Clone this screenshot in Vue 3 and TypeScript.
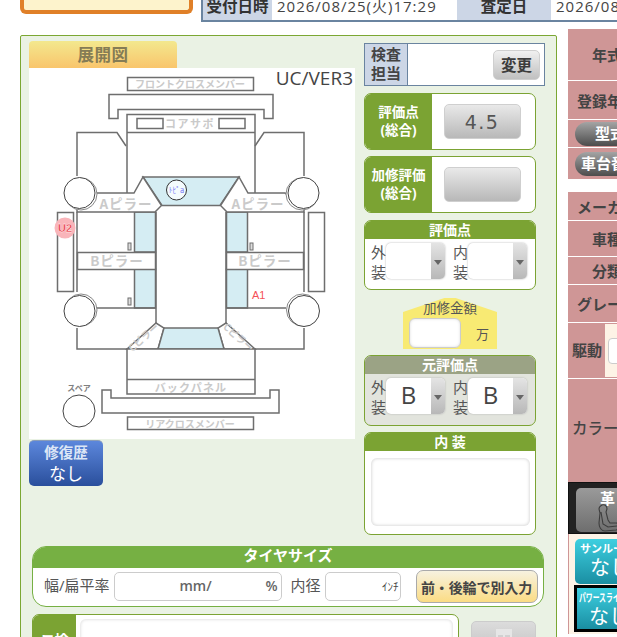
<script setup lang="ts">
const doorSlots = [
  { x: 128, y: 243 },
  { x: 128, y: 298 },
  { x: 250, y: 243 },
]
const wheels = [
  { x: 79.5, y: 193, dx: 1.5, dy: 1 },
  { x: 303.5, y: 193, dx: -1.5, dy: 1 },
  { x: 79.5, y: 311, dx: 1.5, dy: -1 },
  { x: 304, y: 311, dx: -1.5, dy: -1 },
]
const specGroupA = [
  { label: '年式', h: 51 },
  { label: '登録年月', h: 38 },
]
const specGroupB = [
  { label: 'メーカー', h: 28 },
  { label: '車種', h: 35 },
  { label: '分類', h: 27 },
  { label: 'グレード', h: 37 },
]
</script>

<template>
  <div class="page">
    <header class="top">
      <div class="notice"></div>
      <div class="meta">
        <div class="meta-th first">受付日時</div>
        <div class="meta-td first-td">2026/08/25(火)17:29</div>
        <div class="meta-th second">査定日</div>
        <div class="meta-td">2026/08/25</div>
      </div>
    </header>

    <div class="body">
      <main class="panel">
        <div class="upper">
          <section class="left">
            <div class="tab">展開図</div>
            <div class="sheet">
              <span class="ver">UC/VER3</span>
              <svg class="diagram" viewBox="29 68 326 371" width="326" height="371">
                <g class="line">
                  <rect x="127.5" y="77.5" width="126" height="13" />
                  <path d="M109 94.5H273V118.5H264V109.5H118V118.5H109Z" />
                  <path d="M127 193V114.5H255V193M127 132.5H255" />
                  <rect x="137" y="118.5" width="26" height="10" />
                  <rect x="219" y="118.5" width="26" height="10" />
                  <path d="M77 176V132.5H117L126 146M304 176V132.5H264L255 146" />
                  <path class="glass" d="M143 177H239L220 205.5H162Z" />
                  <path class="glass" d="M134.5 212H155.5V252H134.5ZM134.5 269H155.5V308H134.5ZM226.5 212H247.5V252H226.5ZM226.5 269H247.5V308H226.5Z" />
                  <path class="solid" d="M97 193H134L143 177L161.5 205.5L155 212H77V205Z" />
                  <path class="solid" d="M285 193H248L239 177L220.5 205.5L227 212H304V205Z" />
                  <path d="M77 212V292M304 212V292M156 212V323M226 212V323" />
                  <rect class="solid" x="77.5" y="252.5" width="78" height="17" />
                  <rect class="solid" x="226.5" y="252.5" width="77" height="17" />
                  <rect x="57.5" y="212.5" width="16" height="79" />
                  <rect x="308.5" y="212.5" width="16" height="79" />
                  <rect v-for="s in doorSlots" :key="s.y + '-' + s.x" class="slot" :x="s.x" :y="s.y" width="3" height="7" />
                  <path d="M97 308H156M226 308H286" />
                  <path d="M77 328V349H127M304 328V349H255" />
                  <path class="solid" d="M127 349L156 323L164 328L158 349Z" />
                  <path class="solid" d="M255 349L226 323L218 328L224 349Z" />
                  <path class="glass" d="M164 328H218L224 349H158Z" />
                  <path class="solid" d="M127 349H255V394H127ZM127 379.5H255" />
                  <path d="M102 390H111V398H270V390H279V413H102Z" />
                  <rect x="127.5" y="417" width="126" height="12.5" />
                </g>
                <g class="wheels">
                  <template v-for="w in wheels" :key="w.x + '-' + w.y">
                    <circle class="wheel-back" :cx="w.x + w.dx" :cy="w.y + w.dy" r="16" />
                    <circle :cx="w.x" :cy="w.y" r="15.5" />
                  </template>
                  <circle cx="79" cy="411" r="16" />
                </g>
                <g class="label">
                  <text x="190" y="88" font-size="10">フロントクロスメンバー</text>
                  <text x="190" y="128" font-size="11" letter-spacing="1.5">コアサポ</text>
                  <text x="126" y="209" font-size="13.5" letter-spacing="1">Aピラー</text>
                  <text x="258" y="209" font-size="13.5" letter-spacing="1">Aピラー</text>
                  <text x="117" y="266" font-size="13.5" letter-spacing="1">Bピラー</text>
                  <text x="265" y="266" font-size="13.5" letter-spacing="1">Bピラー</text>
                  <text x="191" y="392" font-size="11" letter-spacing="1.2">バックパネル</text>
                  <text x="190" y="428" font-size="10">リアクロスメンバー</text>
                  <text class="pillar" transform="translate(146 340) rotate(-42)" font-size="10">Cピラー</text>
                  <text class="pillar" transform="translate(236 340) rotate(42)" font-size="10">Cピラー</text>
                  <text class="spare" x="79" y="391" font-size="8">スペア</text>
                </g>
                <circle class="mark-top" cx="176.5" cy="190" r="10" />
                <text class="mark-top-text" x="176.5" y="193" font-size="7.5">ﾄﾋﾟa</text>
                <circle class="mark-u2" cx="65" cy="228" r="10.5" />
                <text class="mark-u2-text" x="65" y="232" font-size="11">U2</text>
                <text class="mark-a1" x="252" y="299" font-size="11">A1</text>
              </svg>
            </div>
            <button class="repair" type="button">
              <b>修復歴</b>
              <span>なし</span>
            </button>
          </section>

          <section class="right">
            <div class="inspector">
              <div class="inspector-th">検査<br />担当</div>
              <div class="inspector-td">
                <button class="change" type="button">変更</button>
              </div>
            </div>

            <div class="score">
              <div class="score-label">評価点<br />(総合)</div>
              <div class="score-value"><button class="grey" type="button">4.5</button></div>
            </div>
            <div class="score second-score">
              <div class="score-label">加修評価<br />(総合)</div>
              <div class="score-value"><button class="grey" type="button"></button></div>
            </div>

            <div class="grade grade-blank">
              <div class="grade-head">評価点</div>
              <div class="grade-row">
                <span class="grade-name">外<br />装</span>
                <div class="pick"><span class="pick-val"></span><span class="pick-arrow"></span></div>
                <span class="grade-name inner">内<br />装</span>
                <div class="pick"><span class="pick-val"></span><span class="pick-arrow"></span></div>
              </div>
            </div>

            <div class="amount">
              <span class="amount-title">加修金額</span>
              <div class="amount-row">
                <div class="amount-input"></div>
                <span class="amount-unit">万</span>
              </div>
            </div>

            <div class="grade grade-old">
              <div class="grade-head old-head">元評価点</div>
              <div class="grade-row">
                <span class="grade-name">外<br />装</span>
                <div class="pick"><span class="pick-val">B</span><span class="pick-arrow"></span></div>
                <span class="grade-name inner">内<br />装</span>
                <div class="pick"><span class="pick-val">B</span><span class="pick-arrow"></span></div>
              </div>
            </div>

            <div class="interior">
              <div class="grade-head">内 装</div>
              <div class="interior-body"><div class="interior-text"></div></div>
            </div>
          </section>
        </div>

        <section class="tire">
          <div class="tire-head">タイヤサイズ</div>
          <div class="tire-row">
            <span class="tire-label">幅/扁平率</span>
            <div class="tire-input wide"><span class="mm">mm/</span><span class="pct">%</span></div>
            <span class="tire-label inner-d">内径</span>
            <div class="tire-input narrow"><span class="inch">ｲﾝﾁ</span></div>
            <button class="split" type="button">前・後輪で別入力</button>
          </div>
        </section>

        <div class="lower">
          <div class="note">
            <div class="note-label">コ検</div>
            <div class="note-body"><div class="note-text"></div></div>
          </div>
          <button class="door-btn" type="button">
            <svg viewBox="0 0 20 20" width="20" height="20"><path d="M2 1H18V20H2ZM4 7H9V12H4ZM11 7H16V12H11Z" fill="#e6e6e6" fill-rule="evenodd" /></svg>
          </button>
        </div>
      </main>

      <aside class="spec">
        <div class="spec-group">
          <div v-for="r in specGroupA" :key="r.label" class="spec-row" :style="{ height: r.h + 'px' }">{{ r.label }}</div>
          <div class="spec-row pill-row first-pill"><span class="pill pill-type">型式</span></div>
          <div class="spec-row pill-row"><span class="pill">車台番号</span></div>
        </div>
        <div class="spec-group group-b">
          <div v-for="r in specGroupB" :key="r.label" class="spec-row" :style="{ height: r.h + 'px' }">{{ r.label }}</div>
          <div class="spec-row drive">
            <span>駆動</span>
            <div class="drive-cell"><div class="drive-input"></div></div>
          </div>
          <div class="spec-row color">カラー</div>
        </div>
        <div class="leather">
          <div class="leather-btn">
            <span>革</span>
            <svg viewBox="0 0 26 28" width="26" height="28" class="seat"><path d="M6 1C9 0 11 2 11 5L10 8L12 16L14 19H20C24 19 24 25 20 26L9 27C5 27 3 23 3 19L4 9L3 5C3 3 4 2 6 1ZM5 8L7 20L12 23L21 22" fill="none" stroke="#3d3d3d" stroke-width="1.1" /></svg>
          </div>
        </div>
        <div class="equip">
          <div class="equip-btn sun"><small>サンルーフ</small><span>なし</span></div>
          <div class="equip-btn slide"><small class="condensed">パワースライド</small><span>なし</span></div>
        </div>
      </aside>
    </div>
  </div>
</template>

<style>
html, body { margin: 0; padding: 0; background: #fff; overflow: hidden; }
</style>

<style scoped>
.page {
  width: 617px;
  height: 637px;
  overflow: hidden;
  background: #fff;
  color: #444;
  font-family: "Open Sans", "Noto Sans CJK JP", sans-serif;
  font-size: 14px;
}
.top { display: flex; height: 22px; padding-left: 20px; gap: 8px; }
.notice {
  width: 173px;
  height: 14px;
  box-sizing: border-box;
  background: #fdf3cc;
  border: 4px solid #e08028;
  border-top: 0;
  border-radius: 0 0 6px 6px;
}
.meta {
  display: flex;
  width: 416px;
  height: 22px;
  box-sizing: border-box;
  border-left: 2px solid #6a84a0;
  border-bottom: 2px solid #6a84a0;
  white-space: nowrap;
  overflow: hidden;
  line-height: 12px;
}
.meta-th {
  background: #ccd6e6;
  font-weight: 700;
  font-size: 15.5px;
  color: #333;
  text-align: center;
  flex: none;
}
.first { width: 69px; }
.second { width: 94px; }
.meta-td { padding-left: 5px; font-size: 15px; letter-spacing: 1px; color: #444; flex: none; }
.first-td { width: 185px; box-sizing: border-box; }

.body { display: flex; margin: 13px 0 0 20px; gap: 11px; align-items: flex-start; }
.panel {
  width: 537px;
  height: 640px;
  flex: none;
  box-sizing: border-box;
  background: #eaf2e4;
  border: 1px solid #7ba733;
  border-radius: 2px;
  padding-top: 5px;
}
.upper { display: flex; padding-left: 8px; gap: 9px; height: 505px; }
.left { width: 326px; flex: none; }
.tab {
  width: 148px;
  height: 27px;
  border-radius: 4px 4px 0 0;
  background: linear-gradient(#f3e88e, #f9c56c);
  color: #857c55;
  font-weight: 700;
  font-size: 16.5px;
  line-height: 28px;
  text-align: center;
  letter-spacing: 0.5px;
}
.sheet { position: relative; width: 326px; height: 371px; background: #fff; }
.ver { position: absolute; right: 2px; top: 0; font-size: 19px; line-height: 20px; color: #444; }
.diagram { display: block; }
.line { fill: none; stroke: #6e6e6e; stroke-width: 1.5; }
.line .solid { fill: #fff; }
.line .glass { fill: #d5edf3; }
.line .slot { stroke-width: 1; fill: #ddd; }
.wheels circle { fill: #fff; stroke: #444; stroke-width: 1; }
.wheels .wheel-back { stroke: #888; }
.label text {
  fill: #cacaca;
  font-weight: 700;
  text-anchor: middle;
  font-family: "Noto Sans CJK JP", sans-serif;
}
.label .spare { fill: #808080; }
.mark-top { fill: #f4fbfd; stroke: #333; stroke-width: 1; }
.mark-top-text { fill: #7a7af5; text-anchor: middle; font-family: "Noto Sans CJK JP", sans-serif; }
.mark-u2 { fill: #f9b5ba; }
.mark-u2-text { fill: #e8323c; stroke: #fff; stroke-width: 0.3; text-anchor: middle; font-weight: 700; font-family: "Liberation Sans", sans-serif; }
.mark-a1 { fill: #f55158; font-family: "Liberation Sans", sans-serif; }
.repair {
  display: flex;
  flex-direction: column;
  align-items: center;
  width: 74px;
  height: 46px;
  margin-top: 1px;
  padding: 2px 0 0;
  box-sizing: border-box;
  border: 0;
  border-top: 1px solid #8a9db8;
  border-radius: 5px;
  background: linear-gradient(#5c87dc, #2a4f9c);
  color: #fff;
  font-family: inherit;
  font-size: 14.5px;
  line-height: 20px;
}
.repair b { color: #dce6f6; font-weight: 700; }
.repair span { font-size: 17px; line-height: 22px; }

.right { width: 181px; flex: none; padding-top: 2px; }
.inspector {
  display: flex;
  width: 181px;
  height: 43px;
  box-sizing: border-box;
  border: 1px solid #6a84a0;
  background: #fff;
}
.inspector-th {
  width: 43px;
  flex: none;
  box-sizing: border-box;
  background: #ccd6e6;
  border-right: 1px solid #6a84a0;
  text-align: center;
  font-weight: 700;
  color: #444;
  font-size: 15px;
  line-height: 19px;
  padding-top: 1px;
}
.inspector-td { flex: 1; display: flex; justify-content: flex-end; align-items: center; padding-right: 4px; }
.change {
  width: 47px;
  height: 30px;
  padding: 0;
  border: 1px solid #cfcfcf;
  border-radius: 5px;
  background: linear-gradient(#f0f0f0, #c0c0c0);
  font-family: inherit;
  font-weight: 700;
  font-size: 15.5px;
  color: #3c3c3c;
}
.score {
  display: flex;
  width: 172px;
  height: 57px;
  margin-top: 7px;
  box-sizing: border-box;
  border: 1px solid #7ba333;
  border-radius: 7px;
  background: #fff;
  overflow: hidden;
}
.second-score { margin-top: 6px; }
.score-label {
  width: 67px;
  flex: none;
  background: #7ba333;
  color: #fff;
  font-weight: 700;
  font-size: 13.5px;
  line-height: 18px;
  text-align: center;
  align-self: stretch;
  padding-top: 9px;
  box-sizing: border-box;
  white-space: nowrap;
}
.score-value { flex: 1; display: flex; align-items: center; justify-content: center; padding-right: 3px; }
.grey {
  width: 77px;
  height: 35px;
  padding: 0;
  border: 1px solid #cfcfcf;
  border-radius: 5px;
  background: linear-gradient(#e9e9e9, #b8b8b8);
  font-family: "DejaVu Sans", sans-serif;
  font-size: 19px;
  color: #555;
  letter-spacing: 1.5px;
}
.grade, .interior {
  width: 172px;
  box-sizing: border-box;
  border: 1px solid #7ba333;
  border-radius: 7px;
  overflow: hidden;
  background: #fff;
}
.grade { height: 70px; }
.grade-blank { margin-top: 7px; }
.grade-old { background: #e2e4dd; height: 71px; margin-top: 6px; }
.grade-head {
  height: 19px;
  margin: -1px -1px 0;
  background: #7ba333;
  color: #fff;
  font-weight: 700;
  font-size: 14px;
  line-height: 19px;
  text-align: center;
}
.old-head { background: #9ba385; }
.grade-row { display: flex; padding: 4px 0 0 6px; align-items: flex-start; }
.grade-name { width: 15px; flex: none; font-size: 15px; line-height: 20px; color: #555; margin-top: -1px; }
.inner { margin-left: 8px; }
.pick {
  display: flex;
  width: 59px;
  height: 36px;
  flex: none;
  border-radius: 5px;
  background: #fff;
  box-shadow: 0 0 2px #aaa;
  overflow: hidden;
}
.pick-val {
  flex: 1;
  text-align: center;
  font-size: 24px;
  line-height: 33px;
  color: #444;
}
.pick-arrow {
  position: relative;
  width: 14px;
  flex: none;
  background: linear-gradient(#e4e4e4, #b8b8b8);
}
.pick-arrow::after {
  content: "";
  position: absolute;
  left: 3px;
  top: 17px;
  border: 4px solid transparent;
  border-top: 5px solid #666;
}
.amount {
  position: relative;
  width: 94px;
  height: 51px;
  margin: 8px 0 0 39px;
  clip-path: polygon(0 14px, 44% 0, 56% 0, 100% 14px, 100% 100%, 0 100%);
  background: #f8ea73;
}
.amount-title {
  display: block;
  text-align: center;
  font-size: 13.5px;
  line-height: 18px;
  padding-top: 1px;
  color: #555;
}
.amount-row { display: flex; align-items: center; padding: 1px 0 0 6px; }
.amount-input {
  width: 50px;
  height: 28px;
  border: 1px solid #ccc;
  border-radius: 6px;
  background: #fff;
  box-shadow: inset 0 0 3px #ddd;
}
.amount-unit { margin-left: 15px; font-size: 13px; color: #555; }
.interior { height: 103px; margin-top: 6px; }
.interior-body { padding: 7px 5px 0 6px; }
.interior-text {
  height: 68px;
  border-radius: 6px;
  box-shadow: inset 0 0 3px 1px #ddd;
  background: #fff;
}

.tire {
  width: 512px;
  height: 61px;
  margin-left: 11px;
  box-sizing: border-box;
  border: 1px solid #76b043;
  border-radius: 14px;
  background: #fff;
  overflow: hidden;
}
.tire-head {
  height: 22px;
  margin: -1px -1px 0;
  background: #76b043;
  color: #fff;
  font-weight: 700;
  font-size: 15px;
  line-height: 18px;
  text-align: center;
}
.tire-row { display: flex; align-items: center; padding: 2px 0 0 11px; }
.tire-label { font-size: 15px; color: #555; white-space: nowrap; line-height: 20px; margin-top: -4px; }
.tire-input {
  position: relative;
  height: 29px;
  box-sizing: border-box;
  border: 1px solid #ccc;
  border-radius: 5px;
  background: #fff;
  margin-left: 4px;
  flex: none;
}
.wide { width: 168px; }
.narrow { width: 76px; }
.inner-d { margin-left: 9px; }
.mm { position: absolute; left: 65px; top: 3px; font-weight: 600; color: #666; font-size: 14px; }
.pct { position: absolute; right: 3px; top: 3px; font-weight: 600; color: #666; font-size: 14px; }
.inch { position: absolute; right: 1px; top: 5px; font-size: 11px; color: #444; }
.split {
  width: 122px;
  height: 33px;
  margin-left: 15px;
  padding: 0;
  border: 1px solid #aaa;
  border-radius: 7px;
  background: linear-gradient(#f7f2e0, #fbdc84);
  font-family: inherit;
  font-weight: 700;
  font-size: 14px;
  letter-spacing: -0.1px;
  color: #444;
  white-space: nowrap;
  flex: none;
}

.lower { display: flex; gap: 12px; margin: 7px 0 0 11px; align-items: flex-start; }
.note {
  display: flex;
  width: 427px;
  height: 60px;
  box-sizing: border-box;
  border: 1px solid #7ba333;
  border-radius: 7px;
  background: #fff;
  overflow: hidden;
}
.note-label {
  width: 43px;
  flex: none;
  background: #7ba333;
  color: #fff;
  font-weight: 700;
  text-align: center;
  padding-top: 14px;
  font-size: 14px;
}
.note-body { flex: 1; padding: 4px 5px 0 4px; }
.note-text { height: 50px; border-radius: 6px; box-shadow: inset 0 0 3px 1px #e4e4e4; }
.door-btn {
  display: flex;
  justify-content: center;
  width: 65px;
  height: 40px;
  margin-top: 7px;
  padding: 6px 0 0;
  border: 1px solid #ccc;
  border-radius: 5px;
  background: linear-gradient(#dcdcdc, #bdbdbd);
}

.spec { width: 70px; flex: none; margin-top: -6px; overflow: hidden; height: 620px; }
.spec-group { width: 100px; display: flex; flex-direction: column; gap: 1px; }
.group-b { margin-top: 13px; }
.spec-row {
  display: flex;
  align-items: center;
  justify-content: center;
  box-sizing: border-box;
  width: 78px;
  background: #cf9696;
  color: #444;
  font-weight: 700;
  font-size: 15px;
  white-space: nowrap;
}
.spec-group > .spec-row { box-shadow: 30px 0 0 #cf9696; }
.pill-row { height: 27px; background: #cf9696; justify-content: flex-start; padding-left: 7px; width: 100px; }
.first-pill { height: 27px; }
.spec-group > .pill-row:last-child { height: 31px; }
.pill {
  display: block;
  width: 90px;
  height: 24px;
  flex: none;
  border-radius: 12px;
  background: linear-gradient(#a4a4a4, #4c4c4c);
  color: #fff;
  font-size: 15px;
  line-height: 23px;
  padding-left: 6px;
  box-sizing: border-box;
}
.pill-type { padding-left: 20px; }
.drive {
  width: 100px;
  height: 55px;
  justify-content: flex-start;
  padding: 0 0 3px 4px;
  position: relative;
  font-size: 15px;
}
.drive-cell {
  position: absolute;
  left: 37px;
  top: 1px;
  bottom: 1px;
  width: 60px;
  background: #fdf3e6;
  padding: 14px 0 0 3px;
  box-sizing: border-box;
}
.drive-input { height: 24px; background: #fff; border: 1px solid #ccc; border-radius: 4px; }
.color { width: 100px; height: 103px; justify-content: flex-start; padding: 0 0 7px 4px; font-weight: 500; font-size: 15.5px; }
.leather { width: 100px; height: 52px; background: #222; box-sizing: border-box; padding: 5px 0 2px 7px; border: 1px solid #111; }
.leather-btn {
  position: relative;
  width: 90px;
  height: 44px;
  border-radius: 5px;
  background: linear-gradient(#9a9a9a, #6e6e6e);
  color: #fff;
  font-weight: 700;
  font-size: 15px;
  padding-left: 24px;
  box-sizing: border-box;
  line-height: 20px;
}
.seat { position: absolute; left: 20px; top: 16px; }
.equip {
  width: 100px;
  height: 100px;
  box-sizing: border-box;
  border-left: 1px solid #cf9696;
  background: #fdf3e6;
  padding: 5px 0 0 6px;
}
.equip-btn {
  display: flex;
  flex-direction: column;
  width: 90px;
  height: 45px;
  border-radius: 5px;
  background: linear-gradient(#3ecfe0, #1a8ea2);
  color: #fff;
  box-sizing: border-box;
  padding-left: 5px;
  white-space: nowrap;
}
.equip-btn small { font-size: 11px; font-weight: 700; line-height: 15px; padding-top: 2px; }
.equip-btn span { font-size: 20px; line-height: 24px; padding-left: 10px; }
.slide { border: 3px solid #000; border-radius: 0; height: 47px; margin: 1px 0 0 -1px; padding-left: 2px; }
.condensed { transform: scaleX(0.62); transform-origin: left; width: 130px; }
</style>
